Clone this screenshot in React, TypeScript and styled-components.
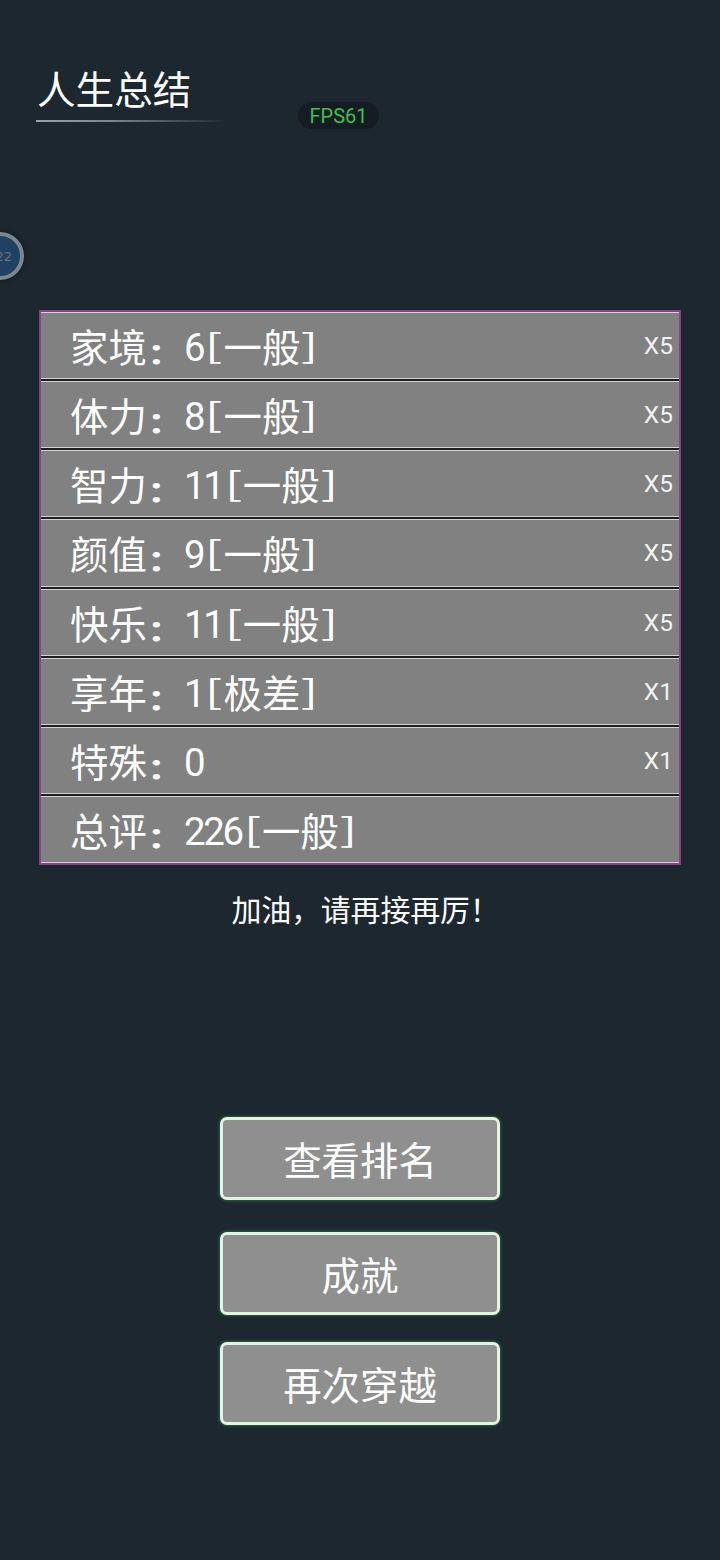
import React from "react";
import styled, { createGlobalStyle } from "styled-components";

const GlobalStyle = createGlobalStyle`
  *, *::before, *::after { box-sizing: border-box; }
  body {
    margin: 0;
    background: #1d272f;
    font-family: "Noto Sans CJK SC", sans-serif;
    color: #fff;
  }
`;

const Screen = styled.main`
  position: relative;
  height: 1560px;
  overflow: hidden;
  display: flex;
  flex-direction: column;
  align-items: center;
`;

const Header = styled.header`
  align-self: stretch;
  height: 310px;
  padding: 52px 0 0 36px;
  display: flex;
  align-items: flex-start;
`;

const Title = styled.h1`
  margin: 0;
  width: 192px;
  height: 70px;
  padding: 5px 0 0 1px;
  font-size: 38.6px;
  line-height: 60px;
  font-weight: 400;
  white-space: nowrap;
  background: linear-gradient(90deg, #9ca2aa 0%, #7d848b 40%, #1d272f 100%) bottom / 100% 2px no-repeat;
`;

const FpsBadge = styled.div`
  margin: 50px 0 0 70px;
  width: 81px;
  height: 27px;
  border-radius: 14px;
  background: #151c23;
  color: #3fc04c;
  font: 20px/28px Roboto, sans-serif;
  text-align: center;
`;

const FloatingBall = styled.div`
  position: absolute;
  left: -24px;
  top: 232px;
  width: 48px;
  height: 48px;
  border-radius: 50%;
  border: 4px solid #7c868f;
  background: #204163;
  box-shadow: 0 0 4px 2px #182026;
  color: #66727e;
  font: 13px/41px "DejaVu Sans", sans-serif;
  text-align: right;
  padding-right: 8px;
`;

const Table = styled.section`
  width: 642px;
  height: 555px;
  margin-bottom: 1px;
  border: 2px solid #8b418c;
  background: #1c2024;
  display: grid;
  grid-template-rows: repeat(8, 1fr);
  row-gap: 2px;
`;

const Row = styled.div`
  display: flex;
  justify-content: space-between;
  border-top: 1px solid #d0d2d3;
  border-bottom: 1px solid #d0d2d3;
  background: #818181;
  padding: 0 6px 0 29px;
  min-height: 0;
`;

const Stat = styled.div`
  display: flex;
  font-size: 38.4px;
  line-height: 65px;
  white-space: nowrap;
`;

const Colon = styled.span`
  width: 1em;
  font-weight: 700;
  transform: translateY(6px) scaleY(0.75);
`;

const Digit = styled.span`
  display: inline-flex;
  justify-content: center;
  width: 0.5em;
  font-family: Roboto, sans-serif;
  font-size: 38.4px;
  line-height: 69px;
`;

const Bracket = styled.span`
  display: inline-flex;
  justify-content: center;
  width: 0.5em;
  transform: translateY(-2px) scale(1.35, 0.86);
`;

const Multiplier = styled.span`
  font: 24.5px/65px Roboto, sans-serif;
  color: #f2f2f2;
`;

const Message = styled.p`
  margin: 20px 0 0;
  height: 44px;
  padding-left: 11px;
  font-size: 30px;
  letter-spacing: -0.2px;
  line-height: 44px;
  white-space: nowrap;
`;

const Actions = styled.nav`
  margin-top: 187px;
  display: flex;
  flex-direction: column;
`;

const ActionButton = styled.button<{ $gap?: number }>`
  width: 280px;
  height: 83px;
  margin: 0 0 ${(p) => p.$gap ?? 0}px;
  padding: 0;
  border: 3px solid #e4f4e2;
  border-radius: 7px;
  background: #8f8f8f;
  box-shadow: 0 0 3px 1px #24663a;
  color: #fff;
  font: 38.4px/77px "Noto Sans CJK SC", sans-serif;
`;

const rows = [
  { label: "家境", value: "6", grade: "一般", factor: "X5" },
  { label: "体力", value: "8", grade: "一般", factor: "X5" },
  { label: "智力", value: "11", grade: "一般", factor: "X5" },
  { label: "颜值", value: "9", grade: "一般", factor: "X5" },
  { label: "快乐", value: "11", grade: "一般", factor: "X5" },
  { label: "享年", value: "1", grade: "极差", factor: "X1" },
  { label: "特殊", value: "0", grade: "", factor: "X1" },
  { label: "总评", value: "226", grade: "一般", factor: "" },
];

export default function App() {
  return (
    <>
      <GlobalStyle />
      <Screen>
        <Header>
          <Title>人生总结</Title>
          <FpsBadge>FPS61</FpsBadge>
        </Header>
        <FloatingBall>22</FloatingBall>
        <Table>
          {rows.map((r) => (
            <Row key={r.label}>
              <Stat>
                <span>{r.label}</span>
                <Colon>：</Colon>
                {r.value.split("").map((d, i) => (
                  <Digit key={i}>{d}</Digit>
                ))}
                {r.grade && (
                  <>
                    <Bracket>[</Bracket>
                    <span>{r.grade}</span>
                    <Bracket>]</Bracket>
                  </>
                )}
              </Stat>
              <Multiplier>{r.factor}</Multiplier>
            </Row>
          ))}
        </Table>
        <Message>加油，请再接再厉！</Message>
        <Actions>
          <ActionButton $gap={32}>查看排名</ActionButton>
          <ActionButton $gap={27}>成就</ActionButton>
          <ActionButton>再次穿越</ActionButton>
        </Actions>
      </Screen>
    </>
  );
}
